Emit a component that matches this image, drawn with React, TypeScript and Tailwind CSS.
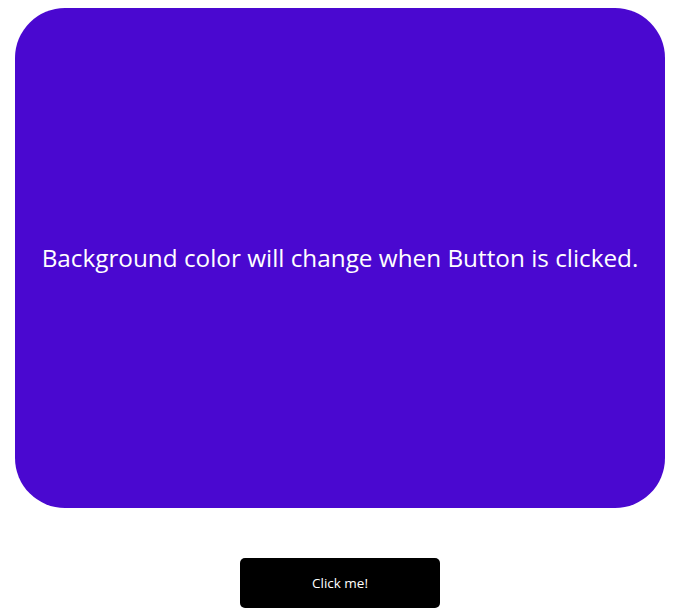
export default function App() {
  return (
    <div className="w-[680px] pt-2 flex flex-col items-center bg-white">
      <div className="w-[650px] h-[500px] rounded-[50px] bg-[#4a08d0] flex items-center justify-center">
        <p className="text-white text-[24.3px] leading-none" style={{ fontFamily: '"Open Sans", sans-serif' }}>
          Background color will change when Button is clicked.
        </p>
      </div>
      <button className="mt-[50px] w-[200px] h-[50px] rounded-[5px] bg-black text-white text-[13.5px] flex items-center justify-center" style={{ fontFamily: '"Open Sans", sans-serif' }}>
        Click me!
      </button>
    </div>
  );
}
